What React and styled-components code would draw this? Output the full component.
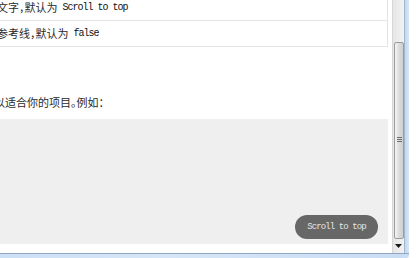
import styled, { createGlobalStyle } from "styled-components";

const GlobalStyle = createGlobalStyle`
  html, body {
    margin: 0;
    padding: 0;
    background: #ffffff;
    overflow: hidden;
  }
`;

const options = [
  { desc: "按钮显示文字，默认为", code: "Scroll to top" },
  { desc: "是否显示参考线，默认为", code: "false" },
];

const App = () => {
  return (
    <Page>
      <GlobalStyle />
      <Window>
        <Body>
          <Viewport>
            <Content>
              <Table>
                <tbody>
                  {options.map((opt) => (
                    <tr key={opt.code}>
                      <Cell>
                        <CellInner>
                          <span>{opt.desc}</span>
                          <Code>{opt.code}</Code>
                        </CellInner>
                      </Cell>
                    </tr>
                  ))}
                </tbody>
              </Table>
              <Text>你可以修改样式以适合你的项目。例如：</Text>
              <Demo />
            </Content>
            <ScrollButton>Scroll to top</ScrollButton>
          </Viewport>
          <Scrollbar>
            <Track>
              <Thumb>
                <Grip />
              </Thumb>
            </Track>
            <Arrow>
              <svg width="7" height="4" viewBox="0 0 7 4">
                <path d="M0 0h7L3.5 4z" fill="#1a1a1a" />
              </svg>
            </Arrow>
          </Scrollbar>
          <SideFrame />
        </Body>
        <BottomFrame />
      </Window>
    </Page>
  );
};

const Page = styled.div`
  width: 418px;
  height: 258px;
  display: flex;
  background: #ffffff;
`;

const Window = styled.div`
  width: 409px;
  height: 258px;
  display: flex;
  flex-direction: column;
  border-bottom-right-radius: 3px;
  overflow: hidden;
`;

const Body = styled.div`
  flex: 1;
  display: flex;
  min-height: 0;
`;

const Viewport = styled.div`
  position: relative;
  flex: 1;
  overflow: hidden;
`;

const Content = styled.div`
  margin-top: -6px;
  margin-left: -55px;
  padding-right: 4px;
  font-family: "Noto Sans CJK SC", "Liberation Sans", sans-serif;
  font-size: 11px;
  font-feature-settings: "halt";
  color: #2a2a2a;
`;

const Table = styled.table`
  width: 100%;
  border-collapse: collapse;
`;

const Cell = styled.td`
  border: 1px solid #e4e4e4;
  padding: 0 0 0 7px;
`;

const CellInner = styled.div`
  height: 25px;
  display: flex;
  align-items: center;
  gap: 5px;
  white-space: nowrap;
  line-height: 1;
`;

const Code = styled.span`
  font-family: "Liberation Mono", monospace;
  font-size: 10px;
  letter-spacing: -1px;
  color: #111;
`;

const Text = styled.p`
  margin: 45px 0 7px -28px;
  height: 20px;
  line-height: 20px;
  white-space: nowrap;
`;

const Demo = styled.div`
  height: 125px;
  background: #efefef;
  margin-bottom: 10px;
`;

const ScrollButton = styled.button`
  position: absolute;
  right: 14px;
  bottom: 14px;
  width: 83px;
  height: 24px;
  border: none;
  border-radius: 12px;
  background: #676767;
  color: #e4e4e4;
  font-family: "Liberation Mono", monospace;
  font-size: 9px;
  letter-spacing: -0.9px;
  padding: 0;
  cursor: pointer;
`;

const Scrollbar = styled.div`
  width: 11px;
  display: flex;
  flex-direction: column;
  border-left: 1px solid #d6d6d6;
  background: linear-gradient(to right, #e6e6e6, #f2f2f2);
`;

const Track = styled.div`
  flex: 1;
  display: flex;
  flex-direction: column;
  padding-top: 42px;
`;

const Thumb = styled.div`
  flex: 1;
  margin: 0 0 0 1px;
  border: 1px solid #9c9c9c;
  border-radius: 2px;
  background: linear-gradient(to right, #f4f4f4, #dadada 55%, #cfcfcf);
  display: flex;
  align-items: center;
  justify-content: center;
`;

const Grip = styled.div`
  width: 5px;
  height: 5px;
  margin-top: -2px;
  background: repeating-linear-gradient(
    to bottom,
    #6e6e6e 0,
    #6e6e6e 1px,
    transparent 1px,
    transparent 2px
  );
`;

const Arrow = styled.div`
  height: 14px;
  display: flex;
  align-items: center;
  justify-content: center;
`;

const SideFrame = styled.div`
  width: 4px;
  border-left: 1px solid #9fb6d2;
  background: linear-gradient(to right, #c4d8f0, #d8e6f7);
`;

const BottomFrame = styled.div`
  height: 4px;
  border-top: 1px solid #8fa7c3;
  background: linear-gradient(to right, #cbdff5, #d6e6f8 40%, #c8dcf3);
`;

export default App;
